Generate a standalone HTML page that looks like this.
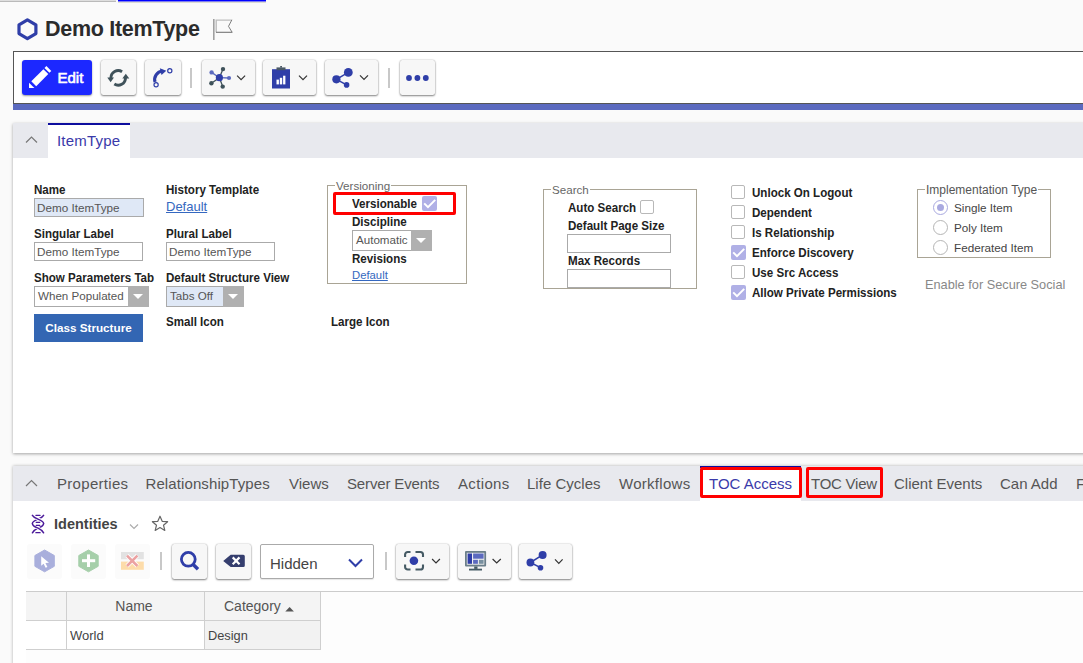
<!DOCTYPE html>
<html><head><meta charset="utf-8">
<style>
*{box-sizing:border-box;margin:0;padding:0}
html,body{width:1083px;height:663px;overflow:hidden;background:#fafafa;font-family:"Liberation Sans",sans-serif;color:#333}
.a{position:absolute}
.t{white-space:nowrap;position:absolute}
.btn{position:absolute;background:#f7f7f7;border-radius:2.5px;box-shadow:0 1px 2px rgba(0,0,0,.45),0 0 1.5px rgba(0,0,0,.3)}
.sep{position:absolute;width:2px;background:#c8c8c8}
.lbl{position:absolute;white-space:nowrap;font-size:12.2px;font-weight:bold;color:#222;line-height:14px;transform:scaleX(0.95);transform-origin:0 0}
.inp{position:absolute;border:1px solid #aaa;background:#fff;font-size:11.7px;color:#555;line-height:18px;padding-left:2px;white-space:nowrap;overflow:hidden}
.sel{position:absolute;border:1px solid #aaa;background:#fff;font-size:11.6px;color:#555;line-height:17px;padding-left:3px;white-space:nowrap}
.sel .dd{position:absolute;top:-1px;right:-1px;bottom:-1px;width:21px;background:#b0b0b0}
.sel .dd:after{content:"";position:absolute;left:5px;top:8px;border-left:5.5px solid transparent;border-right:5.5px solid transparent;border-top:5px solid #fff}
.lnk{position:absolute;white-space:nowrap;font-size:11.3px;color:#3568c0;text-decoration:underline;line-height:14px}
.fs{position:absolute;border:1px solid #a9a495}
.leg{position:absolute;white-space:nowrap;font-size:11.6px;color:#666;background:#fff;line-height:12px;padding:0 1px}
.cb{position:absolute;width:14px;height:14px;border:1px solid #b8b8b8;border-radius:2px;background:#fff}
.cbc{position:absolute;width:15px;height:15px;border-radius:2px;background:#b0b0e6}

.rad{position:absolute;width:15px;height:15px;border:1px solid #b5b5b5;border-radius:50%;background:#fff}
.rl{position:absolute;white-space:nowrap;font-size:11.7px;color:#444;line-height:14px}
.tab{position:absolute;white-space:nowrap;font-size:15px;color:#555;top:475px;line-height:18px}
.red{position:absolute;border:3px solid #ff0000;border-radius:2px}
</style></head><body>

<!-- top tab strip -->
<div class="a" style="left:0;top:0;width:116px;height:1px;background:#dedede"></div>
<div class="a" style="left:0;top:1px;width:116px;height:1px;background:#bababa"></div>
<div class="a" style="left:118px;top:0;width:148px;height:1px;background:#0000ff"></div>
<div class="a" style="left:118px;top:1px;width:148px;height:1px;background:#8080f0"></div>
<div class="a" style="left:118px;top:2px;width:148px;height:1px;background:#dcdcd4"></div>

<!-- title -->
<div class="t" style="left:45px;top:17px;font-size:21.5px;letter-spacing:-0.3px;font-weight:bold;color:#2b2b2b;line-height:24px">Demo ItemType</div>

<!-- toolbar frame -->
<div class="a" style="left:13px;top:51px;width:1080px;height:53px;border:1px solid #555;border-right:none;background:#fff"></div>
<div class="a" style="left:13px;top:104px;width:1070px;height:6px;background:#5b6abf"></div>

<!-- Edit -->
<div class="a" style="left:22px;top:60px;width:70px;height:35px;background:#1c28ff;border-radius:3px;box-shadow:0 1px 2px rgba(0,0,0,.4)"></div>
<div class="t" style="left:57.5px;top:69px;font-size:15px;-webkit-text-stroke:0.6px #fff;color:#fff;line-height:18px">Edit</div>

<div class="btn" style="left:101px;top:60px;width:35px;height:35px"></div>
<div class="btn" style="left:145px;top:60px;width:36px;height:35px"></div>
<div class="sep" style="left:190px;top:68px;height:20px"></div>
<div class="btn" style="left:202px;top:60px;width:53px;height:35px"></div>
<div class="btn" style="left:263px;top:60px;width:53px;height:35px"></div>
<div class="btn" style="left:325px;top:60px;width:53px;height:35px"></div>
<div class="sep" style="left:388px;top:68px;height:20px"></div>
<div class="btn" style="left:400px;top:60px;width:35px;height:35px"></div>

<!-- ItemType panel -->
<div class="a" style="left:13px;top:123px;width:1080px;height:330px;background:#fff;box-shadow:0 1px 3px rgba(0,0,0,.35)"></div>
<div class="a" style="left:13px;top:123px;width:1070px;height:35px;background:#e8e9ee"></div>
<div class="a" style="left:48px;top:123px;width:82px;height:35px;background:#fff;border-top:2px solid #0d0d9e"></div>
<div class="t" style="left:57px;top:132px;font-size:15px;letter-spacing:0.2px;color:#3a3aaa;line-height:18px">ItemType</div>

<!-- form col 1 -->
<div class="lbl" style="left:34px;top:183px">Name</div>
<div class="inp" style="left:34px;top:198px;width:110px;height:19px;background:#dfe8f6">Demo ItemType</div>
<div class="lbl" style="left:34px;top:227px">Singular Label</div>
<div class="inp" style="left:34px;top:242px;width:109px;height:19px">Demo ItemType</div>
<div class="lbl" style="left:34px;top:271px">Show Parameters Tab</div>
<div class="sel" style="left:34px;top:286px;width:115px;height:21px">When Populated<div class="dd"></div></div>
<div class="a" style="left:34px;top:314px;width:109px;height:28px;background:#3366b3"></div>
<div class="t" style="left:34px;top:320px;width:109px;text-align:center;font-size:11.7px;font-weight:bold;color:#fff;line-height:15px">Class Structure</div>

<!-- col 2 -->
<div class="lbl" style="left:166px;top:183px">History Template</div>
<div class="lnk" style="left:166px;top:199px;font-size:13px;line-height:15px">Default</div>
<div class="lbl" style="left:166px;top:227px">Plural Label</div>
<div class="inp" style="left:166px;top:242px;width:109px;height:19px">Demo ItemType</div>
<div class="lbl" style="left:166px;top:271px">Default Structure View</div>
<div class="sel" style="left:166px;top:286px;width:78px;height:21px;background:#dfe8f6">Tabs Off<div class="dd"></div></div>
<div class="lbl" style="left:166px;top:315px">Small Icon</div>
<div class="lbl" style="left:331px;top:315px">Large Icon</div>

<!-- Versioning -->
<div class="fs" style="left:327px;top:185px;width:140px;height:99px"></div>
<div class="leg" style="left:335px;top:180px">Versioning</div>
<div class="lbl" style="left:352px;top:197px">Versionable</div>
<div class="cbc" style="left:422px;top:196px"></div>
<div class="red" style="left:333px;top:192px;width:123px;height:23px"></div>
<div class="lbl" style="left:352px;top:215px">Discipline</div>
<div class="sel" style="left:352px;top:230px;width:80px;height:21px">Automatic<div class="dd"></div></div>
<div class="lbl" style="left:352px;top:252px">Revisions</div>
<div class="lnk" style="left:352px;top:268px">Default</div>

<!-- Search -->
<div class="fs" style="left:543px;top:189px;width:154px;height:100px"></div>
<div class="leg" style="left:551px;top:184px">Search</div>
<div class="lbl" style="left:568px;top:201px">Auto Search</div>
<div class="cb" style="left:640px;top:200px"></div>
<div class="lbl" style="left:568px;top:219px">Default Page Size</div>
<div class="inp" style="left:567px;top:234px;width:104px;height:19px"></div>
<div class="lbl" style="left:568px;top:254px">Max Records</div>
<div class="inp" style="left:567px;top:269px;width:104px;height:19px"></div>

<!-- checkboxes -->
<div class="cb" style="left:731px;top:185px"></div><div class="lbl" style="left:752px;top:186px">Unlock On Logout</div>
<div class="cb" style="left:731px;top:205px"></div><div class="lbl" style="left:752px;top:206px">Dependent</div>
<div class="cb" style="left:731px;top:225px"></div><div class="lbl" style="left:752px;top:226px">Is Relationship</div>
<div class="cbc" style="left:731px;top:245px"></div><div class="lbl" style="left:752px;top:246px">Enforce Discovery</div>
<div class="cb" style="left:731px;top:265px"></div><div class="lbl" style="left:752px;top:266px">Use Src Access</div>
<div class="cbc" style="left:731px;top:285px"></div><div class="lbl" style="left:752px;top:286px">Allow Private Permissions</div>

<!-- Implementation type -->
<div class="fs" style="left:917px;top:189px;width:134px;height:69px"></div>
<div class="leg" style="left:925px;top:184px;font-size:12px;color:#555">Implementation Type</div>
<div class="rad" style="left:933px;top:200px;border-color:#a9a9e0"><div class="a" style="left:3px;top:3px;width:7px;height:7px;border-radius:50%;background:#a9a9e0"></div></div>
<div class="rl" style="left:954px;top:201px">Single Item</div>
<div class="rad" style="left:933px;top:220px"></div>
<div class="rl" style="left:954px;top:221px">Poly Item</div>
<div class="rad" style="left:933px;top:240px"></div>
<div class="rl" style="left:954px;top:241px">Federated Item</div>
<div class="t" style="left:925px;top:277px;font-size:12.75px;color:#888;line-height:15px">Enable for Secure Social</div>

<!-- bottom panel -->
<div class="a" style="left:13px;top:466px;width:1080px;height:210px;background:#fff;box-shadow:0 0 3px rgba(0,0,0,.3)"></div>
<div class="a" style="left:13px;top:466px;width:1070px;height:35px;background:#e8e9ee"></div>
<div class="tab" style="left:57px;letter-spacing:0.3px">Properties</div>
<div class="tab" style="left:145.5px;letter-spacing:0.1px">RelationshipTypes</div>
<div class="tab" style="left:289px">Views</div>
<div class="tab" style="left:347px;letter-spacing:-0.15px">Server Events</div>
<div class="tab" style="left:458px;letter-spacing:0.35px">Actions</div>
<div class="tab" style="left:527px;letter-spacing:0.02px">Life Cycles</div>
<div class="tab" style="left:619px;letter-spacing:0.28px">Workflows</div>
<div class="a" style="left:700px;top:466px;width:101px;height:35px;background:#fff;border-top:2px solid #0d0d9e"></div>
<div class="tab" style="left:709px;color:#3a3aaa">TOC Access</div>
<div class="tab" style="left:811px;letter-spacing:-0.25px">TOC View</div>
<div class="tab" style="left:894px">Client Events</div>
<div class="tab" style="left:1000px">Can Add</div>
<div class="tab" style="left:1076px">F</div>
<div class="red" style="left:700px;top:467px;width:102px;height:31px"></div>
<div class="red" style="left:806px;top:467px;width:77px;height:31px"></div>

<!-- identities -->
<div class="t" style="left:54px;top:516px;font-size:14.5px;font-weight:bold;color:#444;line-height:17px">Identities</div>

<!-- grid toolbar -->
<div class="a" style="left:27px;top:544px;width:35px;height:35px;background:#fbfbfb;border-radius:3px"></div>
<div class="a" style="left:71px;top:544px;width:35px;height:35px;background:#fbfbfb;border-radius:3px"></div>
<div class="a" style="left:115px;top:544px;width:35px;height:35px;background:#fbfbfb;border-radius:3px"></div>
<div class="sep" style="left:160px;top:552px;height:18px"></div>
<div class="btn" style="left:172px;top:544px;width:35px;height:35px"></div>
<div class="btn" style="left:216px;top:544px;width:35px;height:35px"></div>
<div class="a" style="left:260px;top:544px;width:114px;height:35px;border:1px solid #aaa;border-radius:2px;background:#fff;box-shadow:0 1px 1px rgba(0,0,0,.1)"></div>
<div class="t" style="left:270px;top:555px;font-size:15px;color:#444;line-height:18px">Hidden</div>
<div class="sep" style="left:385px;top:552px;height:18px"></div>
<div class="btn" style="left:396px;top:544px;width:53px;height:35px"></div>
<div class="btn" style="left:458px;top:544px;width:53px;height:35px"></div>
<div class="btn" style="left:519px;top:544px;width:53px;height:35px"></div>

<!-- grid -->
<div class="a" style="left:26px;top:591px;width:1060px;height:80px;background:#fdfdfd;border-top:1px solid #ccc"></div>
<div class="a" style="left:26px;top:592px;width:295px;height:29px;background:#f4f4f4;border-bottom:1px solid #cfcfcf;border-right:1px solid #cfcfcf"></div>
<div class="a" style="left:26px;top:621px;width:295px;height:29px;background:#fff;border-bottom:1px solid #cfcfcf;border-right:1px solid #cfcfcf"></div>
<div class="a" style="left:204px;top:621px;width:117px;height:29px;background:#f2f2f2;border-bottom:1px solid #cfcfcf;border-right:1px solid #cfcfcf"></div>
<div class="a" style="left:66px;top:592px;width:1px;height:58px;background:#cfcfcf"></div>
<div class="a" style="left:204px;top:592px;width:1px;height:58px;background:#cfcfcf"></div>
<div class="t" style="left:65.5px;top:598px;width:137px;text-align:center;font-size:14px;color:#555;line-height:17px">Name</div>
<div class="t" style="left:224px;top:598px;font-size:14px;color:#555;line-height:17px">Category</div>
<div class="t" style="left:70px;top:628px;font-size:13px;color:#444;line-height:15px">World</div>
<div class="t" style="left:208px;top:628px;font-size:12.8px;color:#444;line-height:15px">Design</div>

<!-- ICON OVERLAY (page coordinates) -->
<svg class="a" style="left:0;top:0" width="1083" height="663" viewBox="0 0 1083 663">
<!-- title hexagon -->
<polygon points="27.4,19.9 35.9,24.9 35.9,33.6 27.4,38.6 19,33.6 19,24.9" fill="none" stroke="#2f3ea8" stroke-width="3.2" stroke-linejoin="round"/>
<!-- flag -->
<path d="M213.8 18.9 V40" stroke="#a0a0a0" stroke-width="1.6"/>
<path d="M216.2 32.2 V20.1 H231.8" fill="none" stroke="#bdbdbd" stroke-width="1.4"/>
<path d="M231.9 19.8 L228.5 26.3 L232 32.1" fill="none" stroke="#707070" stroke-width="0.9"/>
<path d="M216 32.3 H232.4" stroke="#747474" stroke-width="1.1"/>
<!-- edit pencil -->
<path d="M29 82.8 L29 88 L34.4 88 Z" fill="#fff"/>
<path d="M31.3 81.3 L43.4 69.2 L48.3 74.1 L36.2 86.2 Z" fill="#fff"/>
<path d="M44.5 67.9 L46.4 66 L51.3 70.9 L49.4 72.8 Z" fill="#fff"/>

<!-- sync -->
<path d="M122.07 71.71 A7.3 7.3 0 0 0 110.90 77.90" fill="none" stroke="#3f525a" stroke-width="2.9"/>
<path d="M107.3 77.4 L114 77.4 L110.6 82.2 Z" fill="#3f525a"/>
<path d="M114.33 84.09 A7.3 7.3 0 0 0 125.50 77.90" fill="none" stroke="#3f525a" stroke-width="2.9"/>
<path d="M122.3 78.6 L129.3 78.6 L125.8 73.8 Z" fill="#3f525a"/>
<!-- path icon -->
<path d="M155 82 C153.5 77 157 71.5 162.5 71" fill="none" stroke="#2f3ea8" stroke-width="3.2"/>
<path d="M159.8 68.2 L166.3 70.8 L161.5 75 Z" fill="#2f3ea8"/>
<circle cx="169.8" cy="70.8" r="2.1" fill="none" stroke="#2f3ea8" stroke-width="1.2"/>
<circle cx="156.1" cy="84.8" r="2.1" fill="none" stroke="#2f3ea8" stroke-width="1.2"/>

<!-- network -->
<g stroke-width="1.3">
<line x1="219.4" y1="77.7" x2="223" y2="69.1" stroke="#3f525a"/>
<line x1="219.4" y1="77.7" x2="211.6" y2="72.4" stroke="#5b6abf"/>
<line x1="219.4" y1="77.7" x2="229" y2="78" stroke="#5b6abf"/>
<line x1="219.4" y1="77.7" x2="211.4" y2="83.3" stroke="#3f525a"/>
<line x1="219.4" y1="77.7" x2="222.7" y2="86.6" stroke="#3f525a"/>
</g>
<circle cx="219.4" cy="77.7" r="3.6" fill="#2f3ea8"/>
<circle cx="223" cy="69.1" r="2.2" fill="#3f525a"/>
<circle cx="211.6" cy="72.4" r="2.2" fill="#5b6abf"/>
<circle cx="229" cy="78" r="2.1" fill="#5b6abf"/>
<circle cx="211.4" cy="83.3" r="2.2" fill="#3f525a"/>
<circle cx="222.7" cy="86.6" r="2.2" fill="#3f525a"/>
<path d="M237.1 75.6 L241.1 79.6 L245.1 75.6" fill="none" stroke="#333" stroke-width="1.2"/>

<!-- clipboard -->
<rect x="272" y="69.2" width="18" height="19.3" fill="#2f3ea8"/>
<rect x="276.5" y="67.4" width="9" height="2.8" fill="#4a5866"/>
<rect x="280.2" y="66" width="1.8" height="1.6" fill="#4a5866"/>
<rect x="276.5" y="79.6" width="2.4" height="4.8" fill="#fff"/>
<rect x="279.8" y="77.8" width="2.4" height="6.6" fill="#fff"/>
<rect x="283.1" y="75.7" width="2.3" height="8.7" fill="#fff"/>
<path d="M299 75.6 L303 79.6 L307 75.6" fill="none" stroke="#333" stroke-width="1.2"/>

<!-- share -->
<g stroke="#2f3ea8" stroke-width="1.5"><line x1="336.4" y1="79.3" x2="348.3" y2="72.4"/><line x1="336.4" y1="79.3" x2="346.6" y2="84.9"/></g>
<circle cx="348.3" cy="72.4" r="4.4" fill="#2f3ea8"/>
<circle cx="336.4" cy="79.3" r="4.1" fill="#2f3ea8"/>
<circle cx="346.6" cy="84.9" r="2.8" fill="#2f3ea8"/>
<path d="M360 75.4 L364 79.4 L368 75.4" fill="none" stroke="#333" stroke-width="1.2"/>

<!-- more -->
<circle cx="409" cy="78" r="2.9" fill="#2f3ea8"/>
<circle cx="417.4" cy="78" r="2.9" fill="#2f3ea8"/>
<circle cx="425.8" cy="78" r="2.9" fill="#2f3ea8"/>

<!-- panel chevrons -->
<path d="M26 142.5 L31.5 137 L37 142.5" fill="none" stroke="#777" stroke-width="1.2"/>
<path d="M26 486 L31.5 480.5 L37 486" fill="none" stroke="#777" stroke-width="1.2"/>

<!-- dna -->
<g fill="none" stroke-linecap="round">
<path d="M 43.6 515.3 C 42.5 517.2 40.5 518.2 38.1 519.1 C 35.0 520.3 32.4 521.5 32.4 523.5" stroke="#4b1a9a" stroke-width="1.5"/>
<path d="M43.6 523.5 C43.6 525.7 41 527 37.9 528.1 C35.5 529.2 33.5 530.8 32.4 532.8" stroke="#4b1a9a" stroke-width="1.5"/>
<path d="M32.4 515.3 C33.5 517.2 35.5 518.2 37.9 519.1 C41 520.3 43.6 521.5 43.6 523.5" stroke="#fff" stroke-width="3.2" stroke-linecap="butt"/>
<path d="M32.4 515.3 C33.5 517.2 35.5 518.2 37.9 519.1 C41 520.3 43.6 521.5 43.6 523.5" stroke="#4b1a9a" stroke-width="1.5"/>
<path d="M 32.4 523.5 C 32.4 525.7 35.0 527.0 38.1 528.1 C 40.5 529.2 42.5 530.8 43.6 532.8" stroke="#fff" stroke-width="3.2" stroke-linecap="butt"/>
<path d="M 32.4 523.5 C 32.4 525.7 35.0 527.0 38.1 528.1 C 40.5 529.2 42.5 530.8 43.6 532.8" stroke="#4b1a9a" stroke-width="1.5"/>
<path d="M35.9 515.3 H40.1 M36.2 522.3 H39.8 M36.2 525.3 H39.8 M35.9 532.7 H40.1" stroke="#4b1a9a" stroke-width="1.3"/>
</g>
<!-- identities chevron, star -->
<path d="M130 524.5 L134 528.5 L138 524.5" fill="none" stroke="#aaa" stroke-width="1.1"/>
<path d="M160 516.2 L162.2 521.3 L167.6 521.7 L163.5 525.2 L164.8 530.4 L160 527.6 L155.2 530.4 L156.5 525.2 L152.4 521.7 L157.8 521.3 Z" fill="none" stroke="#666" stroke-width="1.2" stroke-linejoin="round"/>

<!-- grid toolbar icons -->
<path d="M44.6 550 L54.3 555.5 L54.3 566.3 L44.6 571.8 L34.9 566.3 L34.9 555.5 Z" fill="#a9afdc" stroke="#a9afdc" stroke-width="1" stroke-linejoin="round"/>
<path d="M41.2 556.2 L41.2 565.8 L43.6 563.7 L45.6 567.8 L47.4 567 L45.4 563 L49 562.8 Z" fill="#fff"/>
<path d="M88.5 550 L98.2 555.5 L98.2 566.3 L88.5 571.8 L78.8 566.3 L78.8 555.5 Z" fill="#a6cfaa" stroke="#a6cfaa" stroke-width="1" stroke-linejoin="round"/>
<rect x="82" y="559.2" width="13.2" height="3" fill="#fff"/>
<rect x="87" y="554.4" width="3" height="12.6" fill="#fff"/>
<rect x="121" y="552" width="22.8" height="7.2" fill="#e2e2e2"/>
<rect x="121" y="561.6" width="22.8" height="8.2" fill="#fddcaa"/>
<path d="M127 555.6 L137.4 566 M137.4 555.6 L127 566" stroke="#fff" stroke-width="4.2"/>
<path d="M127 555.6 L137.4 566 M137.4 555.6 L127 566" stroke="#eba2a2" stroke-width="2.6"/>

<circle cx="188.3" cy="559.3" r="6.9" fill="none" stroke="#2f3ea8" stroke-width="2.8"/>
<path d="M193.2 564.5 L198 569.3" stroke="#2f3ea8" stroke-width="3.4"/>
<path d="M223.2 560.9 L230.7 554.8 H243.3 A1.5 1.5 0 0 1 244.8 556.3 V565.5 A1.5 1.5 0 0 1 243.3 567 H230.7 Z" fill="#353e6e"/>
<path d="M232.7 557.4 L239.5 564.2 M239.5 557.4 L232.7 564.2" stroke="#fff" stroke-width="2.2"/>
<path d="M349 559.5 L355.5 566 L362 559.5" fill="none" stroke="#2f3ea8" stroke-width="2"/>

<!-- focus -->
<g fill="none" stroke="#455a64" stroke-width="2.1">
<path d="M405.1 557 V554.6 A2.6 2.6 0 0 1 407.7 552 H410.5"/>
<path d="M415.5 552 H420.4 A2.6 2.6 0 0 1 423 554.6 V557"/>
<path d="M423 564.5 V566.9 A2.6 2.6 0 0 1 420.4 569.5 H415.5"/>
<path d="M410.5 569.5 H407.7 A2.6 2.6 0 0 1 405.1 566.9 V564.5"/>
</g>
<circle cx="413.9" cy="560.7" r="4.3" fill="#2f3ea8"/>
<path d="M432.1 559 L436 563 L439.9 559" fill="none" stroke="#333" stroke-width="1.2"/>

<!-- monitor -->
<rect x="465" y="551" width="21.1" height="15.5" rx="1" fill="#6b7f8a"/>
<rect x="466.8" y="552.8" width="17.5" height="11.9" fill="#f0f0f0"/>
<rect x="467.6" y="553.5" width="4.4" height="10.3" fill="#2f3ea8"/>
<rect x="473.1" y="553.5" width="10.5" height="5.2" fill="#5b6abf"/>
<rect x="473.1" y="559.8" width="4.8" height="4" fill="#5b6abf"/>
<rect x="478.9" y="559.8" width="4.7" height="4" fill="#7890a0"/>
<rect x="474.2" y="566.5" width="3.3" height="2.4" fill="#455a64"/>
<rect x="469" y="568.7" width="13" height="1.8" fill="#455a64"/>
<path d="M492.6 559 L496.7 563 L500.8 559" fill="none" stroke="#333" stroke-width="1.2"/>

<!-- share 2 -->
<g stroke="#2f3ea8" stroke-width="1.5"><line x1="530.4" y1="562.5" x2="542.6" y2="554.9"/><line x1="530.4" y1="562.5" x2="540.5" y2="567.7"/></g>
<circle cx="542.6" cy="554.9" r="4" fill="#2f3ea8"/>
<circle cx="530.4" cy="562.5" r="3.9" fill="#2f3ea8"/>
<circle cx="540.5" cy="567.7" r="2.8" fill="#2f3ea8"/>
<path d="M555 559.3 L558.8 563.3 L562.6 559.3" fill="none" stroke="#333" stroke-width="1.2"/>

<!-- checks -->
<path d="M424.2 203.4 L428.0 207.1 L435.2 199.9" fill="none" stroke="#fff" stroke-width="2"/>
<path d="M733.2 252.4 L737.0 256.1 L744.2 248.9" fill="none" stroke="#fff" stroke-width="2"/>
<path d="M733.2 292.4 L737.0 296.1 L744.2 288.9" fill="none" stroke="#fff" stroke-width="2"/>
<!-- sort arrow -->
<path d="M285.3 611.5 L289.6 607 L293.9 611.5 Z" fill="#555"/>
</svg>

</body></html>
